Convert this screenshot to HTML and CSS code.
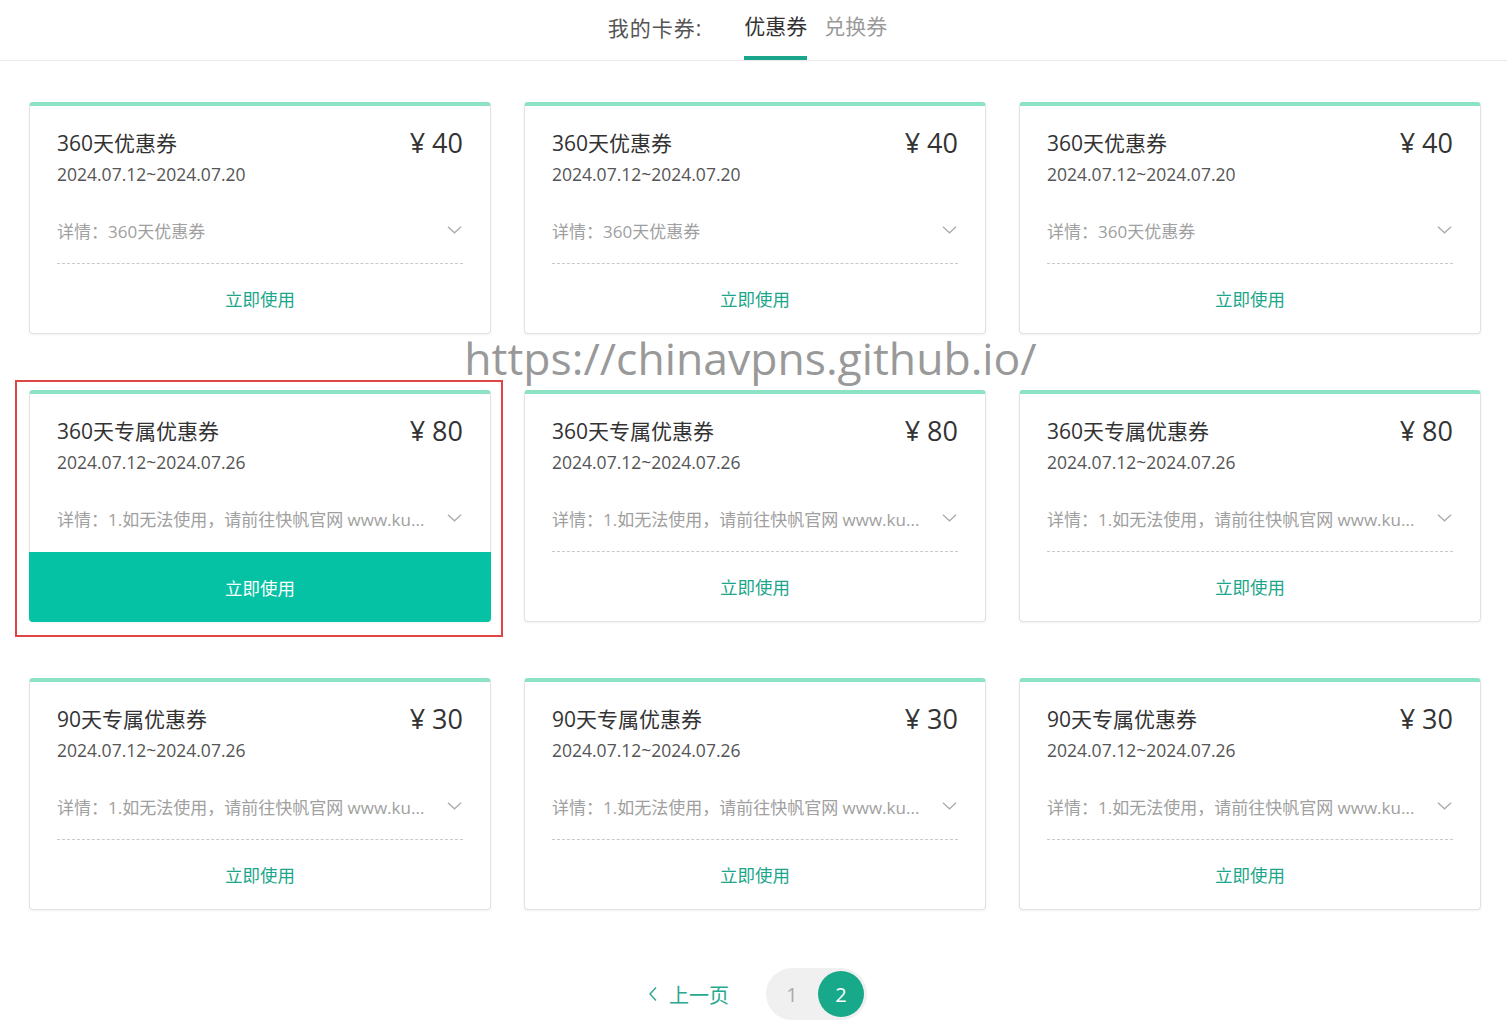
FILE: index.html
```html
<!DOCTYPE html>
<html lang="zh-CN">
<head>
<meta charset="utf-8">
<title>我的卡券</title>
<link rel="stylesheet" href="styles.css">
</head>
<body>
<header class="tabs">
  <span class="tabs-label">我的卡券:</span>
  <span class="tab tab-active">优惠券</span>
  <span class="tab">兑换券</span>
</header>

<main class="grid">
  <div class="card">
    <div class="card-body">
      <div class="card-head"><span class="card-title">360天优惠券</span><span class="card-price">¥ 40</span></div>
      <div class="card-date">2024.07.12~2024.07.20</div>
      <div class="card-detail"><span class="detail-text">详情：360天优惠券</span><svg class="chev" viewBox="0 0 16 10"><path d="M1 1.5 L8 8 L15 1.5" fill="none" stroke="#aaa" stroke-width="1.3"/></svg></div>
    </div>
    <div class="card-btn">立即使用</div>
  </div>
  <div class="card">
    <div class="card-body">
      <div class="card-head"><span class="card-title">360天优惠券</span><span class="card-price">¥ 40</span></div>
      <div class="card-date">2024.07.12~2024.07.20</div>
      <div class="card-detail"><span class="detail-text">详情：360天优惠券</span><svg class="chev" viewBox="0 0 16 10"><path d="M1 1.5 L8 8 L15 1.5" fill="none" stroke="#aaa" stroke-width="1.3"/></svg></div>
    </div>
    <div class="card-btn">立即使用</div>
  </div>
  <div class="card">
    <div class="card-body">
      <div class="card-head"><span class="card-title">360天优惠券</span><span class="card-price">¥ 40</span></div>
      <div class="card-date">2024.07.12~2024.07.20</div>
      <div class="card-detail"><span class="detail-text">详情：360天优惠券</span><svg class="chev" viewBox="0 0 16 10"><path d="M1 1.5 L8 8 L15 1.5" fill="none" stroke="#aaa" stroke-width="1.3"/></svg></div>
    </div>
    <div class="card-btn">立即使用</div>
  </div>

  <div class="card card-hl">
    <div class="card-body">
      <div class="card-head"><span class="card-title">360天专属优惠券</span><span class="card-price">¥ 80</span></div>
      <div class="card-date">2024.07.12~2024.07.26</div>
      <div class="card-detail"><span class="detail-text">详情：1.如无法使用，请前往快帆官网 www.ku...</span><svg class="chev" viewBox="0 0 16 10"><path d="M1 1.5 L8 8 L15 1.5" fill="none" stroke="#aaa" stroke-width="1.3"/></svg></div>
    </div>
    <div class="card-btn">立即使用</div>
    <div class="hl-box"></div>
  </div>
  <div class="card">
    <div class="card-body">
      <div class="card-head"><span class="card-title">360天专属优惠券</span><span class="card-price">¥ 80</span></div>
      <div class="card-date">2024.07.12~2024.07.26</div>
      <div class="card-detail"><span class="detail-text">详情：1.如无法使用，请前往快帆官网 www.ku...</span><svg class="chev" viewBox="0 0 16 10"><path d="M1 1.5 L8 8 L15 1.5" fill="none" stroke="#aaa" stroke-width="1.3"/></svg></div>
    </div>
    <div class="card-btn">立即使用</div>
  </div>
  <div class="card">
    <div class="card-body">
      <div class="card-head"><span class="card-title">360天专属优惠券</span><span class="card-price">¥ 80</span></div>
      <div class="card-date">2024.07.12~2024.07.26</div>
      <div class="card-detail"><span class="detail-text">详情：1.如无法使用，请前往快帆官网 www.ku...</span><svg class="chev" viewBox="0 0 16 10"><path d="M1 1.5 L8 8 L15 1.5" fill="none" stroke="#aaa" stroke-width="1.3"/></svg></div>
    </div>
    <div class="card-btn">立即使用</div>
  </div>

  <div class="card">
    <div class="card-body">
      <div class="card-head"><span class="card-title">90天专属优惠券</span><span class="card-price">¥ 30</span></div>
      <div class="card-date">2024.07.12~2024.07.26</div>
      <div class="card-detail"><span class="detail-text">详情：1.如无法使用，请前往快帆官网 www.ku...</span><svg class="chev" viewBox="0 0 16 10"><path d="M1 1.5 L8 8 L15 1.5" fill="none" stroke="#aaa" stroke-width="1.3"/></svg></div>
    </div>
    <div class="card-btn">立即使用</div>
  </div>
  <div class="card">
    <div class="card-body">
      <div class="card-head"><span class="card-title">90天专属优惠券</span><span class="card-price">¥ 30</span></div>
      <div class="card-date">2024.07.12~2024.07.26</div>
      <div class="card-detail"><span class="detail-text">详情：1.如无法使用，请前往快帆官网 www.ku...</span><svg class="chev" viewBox="0 0 16 10"><path d="M1 1.5 L8 8 L15 1.5" fill="none" stroke="#aaa" stroke-width="1.3"/></svg></div>
    </div>
    <div class="card-btn">立即使用</div>
  </div>
  <div class="card">
    <div class="card-body">
      <div class="card-head"><span class="card-title">90天专属优惠券</span><span class="card-price">¥ 30</span></div>
      <div class="card-date">2024.07.12~2024.07.26</div>
      <div class="card-detail"><span class="detail-text">详情：1.如无法使用，请前往快帆官网 www.ku...</span><svg class="chev" viewBox="0 0 16 10"><path d="M1 1.5 L8 8 L15 1.5" fill="none" stroke="#aaa" stroke-width="1.3"/></svg></div>
    </div>
    <div class="card-btn">立即使用</div>
  </div>
</main>

<nav class="pager">
  <span class="prev"><svg class="prev-ico" viewBox="0 0 10 16"><path d="M8 1.5 L2 8 L8 14.5" fill="none" stroke="#2aa88e" stroke-width="1.4"/></svg>上一页</span>
  <span class="pill"><span class="page">1</span><span class="page page-on">2</span></span>
</nav>

<div class="watermark">https://chinavpns.github.io/</div>
</body>
</html>
```

FILE: styles.css
```css
* { box-sizing: border-box; }
html, body { margin: 0; padding: 0; background: #fff; }
body {
  font-family: "Open Sans", "Noto Sans CJK SC", "Noto Sans", sans-serif;
  color: #333;
  position: relative;
  width: 1507px;
  height: 1022px;
  overflow: hidden;
}

.tabs {
  height: 61px;
  border-bottom: 1px solid #e9e9e9;
  display: flex;
  justify-content: center;
  align-items: stretch;
  font-size: 21px;
  padding-right: 12px;
}
.tabs-label {
  color: #555;
  display: flex;
  align-items: center;
  padding-bottom: 6px;
  margin-right: 42px;
  letter-spacing: 1px;
}
.tab {
  color: #9a9a9a;
  display: flex;
  align-items: center;
  padding-bottom: 6px;
  border-bottom: 4px solid transparent;
  margin-right: 17px;
}
.tab-active {
  color: #333;
  border-bottom-color: #1aa68a;
}
.tab:last-child { margin-right: 0; }

.grid {
  display: grid;
  grid-template-columns: repeat(3, 462px);
  column-gap: 33px;
  row-gap: 56px;
  padding: 41px 0 0 29px;
}

.card {
  position: relative;
  height: 232px;
  background: #fff;
  border: 1px solid #e2e2e2;
  border-top: 4px solid #8ce3c4;
  border-radius: 4px;
  box-shadow: 0 1px 3px rgba(0,0,0,0.06);
  display: flex;
  flex-direction: column;
}
.card-body {
  padding: 21px 27px 0 27px;
  flex: 1;
  display: flex;
  flex-direction: column;
}
.card-head {
  display: flex;
  justify-content: space-between;
  align-items: center;
  height: 30px;
}
.card-title {
  font-size: 21px;
  color: #333;
}
.card-price {
  font-size: 27px;
  color: #333;
}
.card-date {
  margin-top: 4px;
  font-size: 17.5px;
  line-height: 26px;
  color: #555;
}
.card-detail {
  margin-top: 30px;
  display: flex;
  align-items: center;
  justify-content: space-between;
  height: 26px;
  font-size: 17px;
  color: #a0a0a0;
}
.detail-text {
  white-space: nowrap;
}
.chev { width: 15px; height: 10px; margin-right: 1px; }

.card-btn {
  margin: 0 27px;
  border-top: 1px dashed #c9c9c9;
  height: 70px;
  display: flex;
  align-items: center;
  justify-content: center;
  font-size: 17.5px;
  color: #1ba68b;
}
.card-hl .card-btn {
  margin: 0 -1px -1px -1px;
  border-top: 1px solid #05c2a5;
  background: #05c2a5;
  color: #fff;
  border-radius: 0 0 4px 4px;
}
.hl-box {
  position: absolute;
  top: -14px;
  left: -15px;
  right: -13px;
  bottom: -16px;
  border: 2px solid #e04545;
  pointer-events: none;
}

.pager {
  margin-top: 58px;
  display: flex;
  justify-content: center;
  align-items: center;
  gap: 37px;
  padding-left: 8px;
}
.prev {
  display: flex;
  align-items: center;
  color: #2aa88e;
  font-size: 20px;
}
.prev-ico { width: 10px; height: 16px; margin-right: 11px; }
.pill {
  display: flex;
  align-items: center;
  height: 52px;
  padding: 0 3px 0 0;
  background: #f0f0f0;
  border-radius: 26px;
}
.page {
  width: 52px;
  height: 46px;
  display: flex;
  align-items: center;
  justify-content: center;
  font-size: 20px;
  color: #aaa;
}
.page-on {
  width: 46px;
  border-radius: 50%;
  background: #18a88a;
  color: #fff;
}

.watermark {
  position: absolute;
  top: 327px;
  left: 0;
  width: 1501px;
  text-align: center;
  font-size: 44.5px;
  color: #999;
  font-family: "Open Sans", "Noto Sans", sans-serif;
}
```
